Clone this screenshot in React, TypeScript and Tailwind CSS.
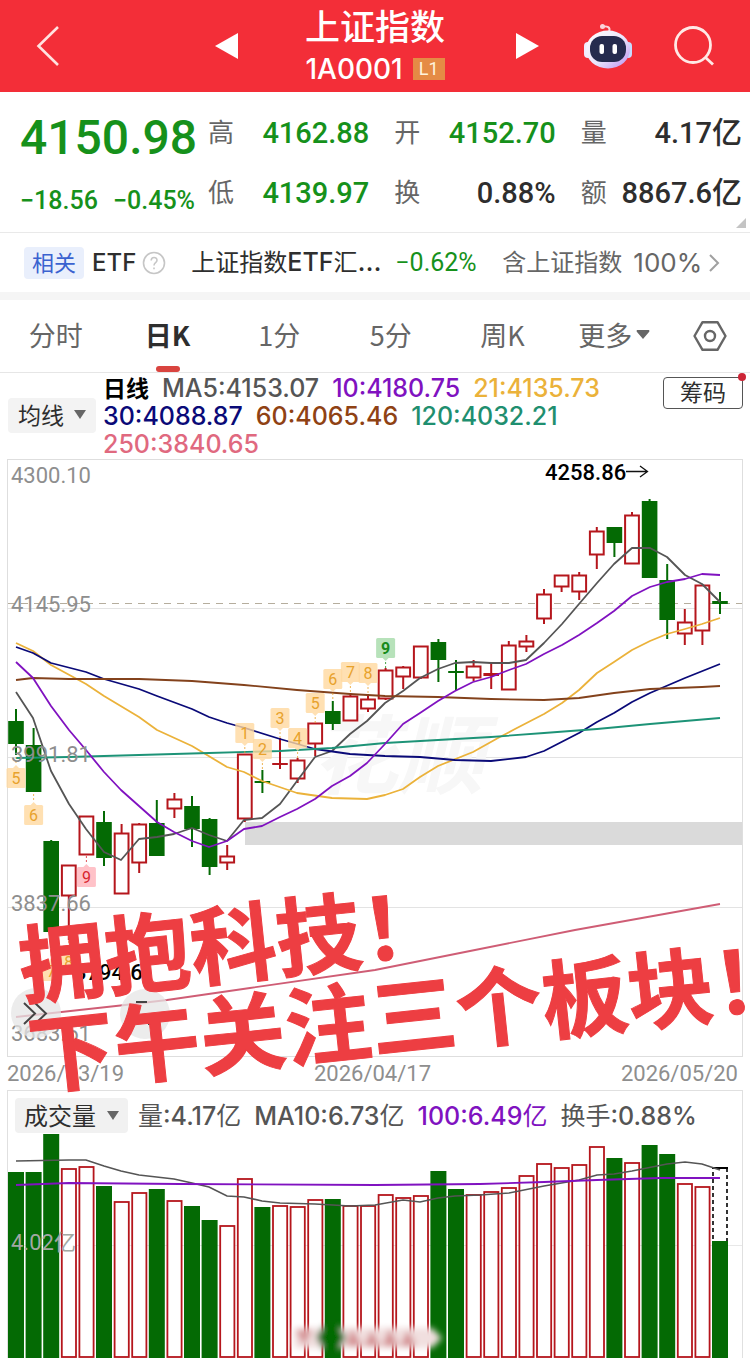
import React from "react";

type Candle = {
  up: boolean;
  high: number;
  top: number;
  bottom: number;
  low: number;
};

const STEP = 17.6;
const FIRST = 16;
const xAt = (i: number) => FIRST + i * STEP;

const c = (up: boolean, high: number, top: number, bottom: number, low: number): Candle => ({
  up,
  high,
  top,
  bottom,
  low,
});

const candles: Candle[] = [
  c(false, 709, 721, 744, 755),
  c(false, 728, 745, 792, 792),
  c(false, 840, 841, 932, 948),
  c(true, 865, 865, 896, 940),
  c(true, 816, 816, 855, 855),
  c(false, 811, 822, 858, 866),
  c(true, 824, 833, 894, 894),
  c(true, 823, 824, 863, 873),
  c(false, 800, 823, 856, 856),
  c(true, 793, 799, 809, 818),
  c(false, 796, 806, 829, 847),
  c(false, 818, 819, 867, 875),
  c(true, 845, 856, 863, 870),
  c(true, 754, 754, 819, 822),
  c(false, 770, 781, 783, 793),
  c(true, 738, 763, 765, 769),
  c(true, 758, 760, 779, 783),
  c(true, 723, 723, 744, 756),
  c(false, 701, 711, 724, 730),
  c(true, 693, 696, 721, 721),
  c(true, 694, 699, 709, 712),
  c(true, 668, 670, 699, 700),
  c(true, 666, 667, 677, 689),
  c(true, 646, 646, 678, 679),
  c(false, 639, 642, 660, 682),
  c(false, 660, 671, 673, 690),
  c(true, 660, 666, 678, 681),
  c(true, 663, 673, 676, 689),
  c(true, 641, 645, 690, 690),
  c(true, 635, 641, 647, 652),
  c(true, 589, 594, 619, 624),
  c(true, 575, 575, 587, 592),
  c(true, 572, 575, 592, 600),
  c(true, 527, 531, 555, 569),
  c(false, 527, 527, 543, 557),
  c(true, 512, 515, 564, 564),
  c(false, 499, 501, 578, 578),
  c(false, 564, 580, 620, 639),
  c(true, 609, 622, 634, 645),
  c(true, 585, 585, 631, 645),
  c(false, 592, 601, 604, 614),
];

const averages: { color: string; points: string }[] = [
  {
    color: "#555555",
    points:
      "16,692 33,718 51,771 69,804 86,829 104,852 121,860 139,839 157,837 174,834 192,828 209,835 227,841 244,820 262,818 280,804 297,781 315,757 332,751 350,734 367,721 385,703 403,691 420,678 438,669 455,663 473,662 491,663 509,663 526,660 544,643 562,624 579,604 597,583 614,564 632,548 650,548 667,557 685,575 702,584 720,602",
  },
  {
    color: "#ebb23a",
    points:
      "16,643 33,651 51,665 86,684 104,696 139,717 157,730 192,746 227,767 244,772 262,781 297,793 332,798 367,799 385,795 403,789 420,777 438,766 473,752 498,738 515,729 544,714 562,703 579,690 597,673 614,662 632,650 650,641 667,634 685,629 702,624 720,618",
  },
  {
    color: "#0a0a78",
    points:
      "16,647 33,653 51,663 86,672 104,679 139,689 157,696 192,709 209,717 227,723 245,728 280,739 315,749 350,754 385,756 420,757 455,760 491,761 526,757 544,751 579,733 597,722 614,713 632,702 650,693 685,678 720,664",
  },
  {
    color: "#83421c",
    points:
      "16,680 33,678 69,679 139,679 192,681 244,685 297,690 350,694 385,696 438,697 491,699 544,700 579,698 614,693 650,689 702,687 720,686",
  },
  {
    color: "#1d9377",
    points:
      "16,758 69,757 139,755 209,753 280,751 332,748 385,743 438,740 491,737 544,733 597,729 650,724 685,721 720,718",
  },
  {
    color: "#8012c0",
    points:
      "16,662 33,678 51,706 69,730 86,750 104,772 121,790 139,806 157,822 174,832 192,841 209,847 227,841 244,829 262,826 280,817 297,809 315,799 332,786 350,776 367,763 385,744 403,724 420,713 438,701 455,691 473,682 491,677 509,670 526,664 544,654 562,645 579,635 597,623 614,611 632,596 650,587 667,582 685,579 702,574 720,575",
  },
  { color: "#cf5d75", points: "16,1017 125,1005 167,1000 250,988 375,970 475,950 575,930 720,904" },
];

const tags: { i: number; y: number; text: string; tone: "orange" | "red" | "green"; down: boolean }[] = [
  { i: 0, y: 778, text: "5", tone: "orange", down: false },
  { i: 1, y: 815, text: "6", tone: "orange", down: false },
  { i: 2, y: 971, text: "7", tone: "orange", down: false },
  { i: 3, y: 962, text: "8", tone: "orange", down: false },
  { i: 4, y: 877, text: "9", tone: "red", down: false },
  { i: 13, y: 733, text: "1", tone: "orange", down: true },
  { i: 14, y: 749, text: "2", tone: "orange", down: true },
  { i: 15, y: 718, text: "3", tone: "orange", down: true },
  { i: 16, y: 738, text: "4", tone: "orange", down: true },
  { i: 17, y: 703, text: "5", tone: "orange", down: true },
  { i: 18, y: 679, text: "6", tone: "orange", down: true },
  { i: 19, y: 672, text: "7", tone: "orange", down: true },
  { i: 20, y: 673, text: "8", tone: "orange", down: true },
  { i: 21, y: 648, text: "9", tone: "green", down: true },
];

const tones = {
  orange: { bg: "#ffd9a0", fg: "#e8a22c" },
  red: { bg: "#ffb3bb", fg: "#d8262f" },
  green: { bg: "#a6dbaa", fg: "#168a1c" },
};

const volumes: [boolean, number][] = [
  [false, 1172], [false, 1172], [false, 1134], [true, 1168], [true, 1166], [false, 1186],
  [true, 1201], [true, 1192], [false, 1189], [true, 1200], [false, 1206], [false, 1220],
  [true, 1225], [true, 1178], [false, 1207], [true, 1205], [true, 1206], [true, 1199],
  [false, 1199], [true, 1205], [true, 1205], [true, 1194], [true, 1197], [true, 1195],
  [false, 1171], [false, 1189], [true, 1194], [true, 1191], [true, 1187], [true, 1175],
  [true, 1163], [true, 1167], [true, 1164], [true, 1146], [false, 1158], [true, 1162],
  [false, 1145], [false, 1154], [true, 1183], [true, 1186],
];

const RED = "#b5161c";
const GREEN = "#046a04";

const axisLabels: [number, string][] = [
  [483, "4300.10"],
  [612, "4145.95"],
  [762, "3991.81"],
  [911, "3837.66"],
  [1041, "3683.51"],
];

function Header() {
  return (
    <header className="flex h-[92px] items-center bg-[#f32e38] text-white">
      <button aria-label="返回" className="ml-9 flex h-12 w-6 items-center justify-center">
        <svg viewBox="0 0 24 40" className="h-10 w-6" fill="none" stroke="#ffe3e0" strokeWidth="2.6">
          <path d="M22 1 L2.500 20 L22 39" />
        </svg>
      </button>
      <div className="flex flex-1 items-center justify-end pr-[62px]">
        <button aria-label="上一个">
          <svg viewBox="0 0 23 26" className="h-[26px] w-[23px]" fill="#fff">
            <path d="M23 0 V26 L0 13 Z" />
          </svg>
        </button>
      </div>
      <div className="flex w-[150px] flex-col items-center">
        <h1 className="text-[35px] font-medium leading-[46px]">上证指数</h1>
        <div className="flex items-center gap-[10px] leading-[42px]">
          <span className="font-[Inter] text-[28px] font-medium">1A0001</span>
          <span className="bg-[#e58b45] px-[6px] font-[Roboto] text-[18px] leading-[22px] text-[#fff3dc]">L1</span>
        </div>
      </div>
      <div className="flex w-[300px] items-center pl-[66px]">
        <button aria-label="下一个">
          <svg viewBox="0 0 23 26" className="h-[26px] w-[23px]" fill="#fff">
            <path d="M0 0 V26 L23 13 Z" />
          </svg>
        </button>
        <button aria-label="智能助手" className="ml-11">
          <svg viewBox="0 0 50 46" className="h-[46px] w-[50px]">
            <defs>
              <linearGradient id="shell" x1="0" y1="0" x2="1" y2="1">
                <stop offset="0" stopColor="#ffffff" />
                <stop offset="0.55" stopColor="#e9e4fb" />
                <stop offset="1" stopColor="#b98cf0" />
              </linearGradient>
            </defs>
            <path d="M26 9 C28 4 24 3 20 3.500" fill="none" stroke="#fbd3da" strokeWidth="2" />
            <circle cx="19.500" cy="3.500" r="2.500" fill="#fbd3da" />
            <rect x="1" y="19" width="8" height="16" rx="4" fill="#f1ecff" />
            <rect x="41" y="19" width="8" height="16" rx="4" fill="#c6dcff" />
            <ellipse cx="25" cy="26.500" rx="22" ry="19" fill="url(#shell)" />
            <rect x="7" y="13" width="36" height="26" rx="12" fill="#252b4e" />
            <rect x="16.500" y="21" width="4.500" height="10" rx="2" fill="#fff" />
            <rect x="29.500" y="21" width="4.500" height="10" rx="2" fill="#fff" />
          </svg>
        </button>
        <button aria-label="搜索" className="ml-[41px]">
          <svg viewBox="0 0 40 40" className="size-10" fill="none" stroke="#ffe9e6" strokeWidth="2.8">
            <circle cx="19" cy="19" r="17.500" />
            <path d="M31.500 31.500 L39 38.500" />
          </svg>
        </button>
      </div>
    </header>
  );
}

function Stat({ label, value, unit, green }: { label: string; value: string; unit?: string; green?: boolean }) {
  return (
    <div className="flex items-center justify-between leading-10">
      <dt className="pb-1 text-[26px] text-[#666]">{label}</dt>
      <dd
        className={
          green
            ? "font-[Roboto] text-[29px] font-medium text-[#16911b]"
            : "font-[Roboto] text-[29px] font-medium text-[#2e2e2e]"
        }
      >
        {value}
        {unit && <span className="font-['Noto_Sans_CJK_SC'] text-[30px] leading-none">{unit}</span>}
      </dd>
    </div>
  );
}

function Quote() {
  return (
    <section className="relative flex h-[141px] border-b border-[#e9e9e9] pl-5 pr-2 pt-[11px]">
      <div className="w-[188px] shrink-0 font-[Roboto] font-medium text-[#16911b]">
        <div className="text-[48px] leading-[70px]">4150.98</div>
        <div className="flex w-[175px] justify-between text-[25px] leading-[56px]">
          <span>−18.56</span>
          <span>−0.45%</span>
        </div>
      </div>
      <dl className="grid h-[120px] flex-1 grid-cols-3 grid-rows-2 gap-x-[25px]">
        <Stat label="高" value="4162.88" green />
        <Stat label="开" value="4152.70" green />
        <Stat label="量" value="4.17" unit="亿" />
        <Stat label="低" value="4139.97" green />
        <Stat label="换" value="0.88%" />
        <Stat label="额" value="8867.6" unit="亿" />
      </dl>
      <svg viewBox="0 0 10 10" className="absolute bottom-1 right-1 size-[10px]" fill="#c4c4c4">
        <path d="M10 0 V10 H0 Z" />
      </svg>
    </section>
  );
}

function Related() {
  return (
    <a
      href="#etf"
      className="flex h-[67px] items-center whitespace-nowrap border-b-8 border-[#f5f5f5] pl-6 text-[24px] text-[#2e2e2e]"
    >
      <span className="rounded bg-[#e9effc] px-2 pb-1 text-[22px] leading-7 text-[#3a62d0]">相关</span>
      <span className="ml-2 font-[Inter] font-medium">ETF</span>
      <svg viewBox="0 0 24 24" className="ml-[6px] size-6" fill="none" stroke="#c6c6c6" strokeWidth="1.600">
        <circle cx="12" cy="12" r="10.500" />
        <path d="M9.200 9.500 C9.200 5.500 15 5.700 15 9.200 C15 11.600 12 11.800 12 14.400 M12 16.600 V18.200" />
      </svg>
      <span className="ml-[25px] w-[192px] pb-1">
        上证指数<span className="font-[Inter] text-[25px] font-medium">ETF</span>汇
        <span className="font-[Inter] text-[28px]">...</span>
      </span>
      <span className="ml-[12px] w-[95px] font-[Roboto] text-[25px] text-[#16911b]">−0.62%</span>
      <span className="ml-3 pb-1 text-[#666]">含上证指数</span>
      <span className="ml-[11px] font-[Inter] text-[26px] text-[#666]">100%</span>
      <svg viewBox="0 0 12 20" className="ml-[6px] h-5 w-3" fill="none" stroke="#a0a0a0" strokeWidth="2">
        <path d="M2 2 L10 10 L2 18" />
      </svg>
    </a>
  );
}

function Tabs() {
  const names = ["分时", "日K", "1分", "5分", "周K", "更多"];
  return (
    <nav className="flex h-[73px] border-b border-[#e6e6e6] text-[27px] text-[#666]">
      {names.map((name) => {
        const active = name === "日K";
        return (
          <button
            key={name}
            className={
              active
                ? "relative flex flex-1 items-center justify-center pb-[2px] font-bold text-[#2e2e2e]"
                : "relative flex flex-1 items-center justify-center pb-[2px]"
            }
          >
            {name}
            {name === "更多" && (
              <svg viewBox="0 0 14 10" className="ml-1 h-[10px] w-[14px]" fill="#666">
                <path d="M1 0 H13 Q14 1 13 2 L7 9 L1 2 Q0 1 1 0 Z" />
              </svg>
            )}
            {active && <span className="absolute bottom-0 h-[6px] w-6 rounded-full bg-[#d9443f]" />}
          </button>
        );
      })}
      <button aria-label="设置" className="flex w-20 items-center justify-center">
        <svg viewBox="0 0 34 30" className="h-[30px] w-[34px]" fill="none" stroke="#666" strokeWidth="2.400">
          <path d="M9.500 1.200 H24.500 L32.500 15 L24.500 28.800 H9.500 L1.500 15 Z" strokeLinejoin="round" />
          <circle cx="17" cy="15" r="5" />
        </svg>
      </button>
    </nav>
  );
}

function Caret() {
  return (
    <svg viewBox="0 0 12 9" className="h-[9px] w-3" fill="#666">
      <path d="M0 0 H12 L6 9 Z" />
    </svg>
  );
}

function Legend() {
  return (
    <section className="flex h-[86px] items-start pl-2 pr-[7px]">
      <button className="mt-[25px] flex h-[35px] w-[88px] items-center justify-center gap-[10px] rounded bg-[#f3f3f3] pb-[2px] text-[23px] text-[#2e2e2e]">
        均线 <Caret />
      </button>
      <div className="ml-[7px] min-w-0 flex-1 whitespace-nowrap pt-px font-[Inter] text-[25px] font-medium leading-7">
        <div className="flex gap-[13px]">
          <span className="font-['Noto_Sans_CJK_SC'] text-[23px] font-bold leading-[26px] text-black">日线</span>
          <span className="text-[#555]">MA5:4153.07</span>
          <span className="text-[#8012c0]">10:4180.75</span>
          <span className="text-[#ebb23a]">21:4135.73</span>
        </div>
        <div className="flex gap-[13px]">
          <span className="text-[#0a0a78]">30:4088.87</span>
          <span className="text-[#8f4214]">60:4065.46</span>
          <span className="text-[#1f8f70]">120:4032.21</span>
        </div>
        <div className="text-[#e0697f]">250:3840.65</div>
      </div>
      <button className="relative mt-1 h-8 w-20 rounded border border-[#555] pb-1 text-[23px] leading-[26px] text-[#2e2e2e]">
        筹码
        <span className="absolute -right-1 -top-[5px] size-2 rounded-full bg-[#cc2536]" />
      </button>
    </section>
  );
}

function PriceChart() {
  return (
    <div className="relative">
      <svg viewBox="0 459 750 599" className="block h-auto w-full">
        <rect x="7.500" y="459.500" width="735" height="597" fill="none" stroke="#dedede" />
        <path d="M8 608.500 H742 M8 757.500 H742 M8 907.500 H742" stroke="#e3e3e3" />
        <text x="312" y="787" fontFamily="Noto Sans CJK SC" fontWeight="700" fontSize="86" fill="#f7f7f7" fontStyle="italic">
          花顺
        </text>
        <path d="M8 603.500 H742" stroke="#b5ad9d" strokeDasharray="7 6" />
        <rect x="245" y="822" width="497" height="23" fill="#dadada" />
        {candles.map((k, i) => {
          const x = xAt(i);
          const color = k.up ? RED : GREEN;
          const thin = k.bottom - k.top < 4;
          return (
            <g key={i} stroke={color} strokeWidth="2">
              <path d={`M${x} ${k.high} V${k.top} M${x} ${k.bottom} V${k.low}`} />
              {k.up && !thin ? (
                <rect x={x - 6.9} y={k.top + 0.5} width="13.800" height={k.bottom - k.top - 1} fill="#fff" />
              ) : (
                <rect x={x - 7.8} y={k.top} width="15.600" height={k.bottom - k.top} fill={color} stroke="none" />
              )}
              {thin && <path d={`M${x} ${k.top} V${k.bottom}`} />}
            </g>
          );
        })}
        {averages.map((a) => (
          <polyline
            key={a.color}
            points={a.points}
            fill="none"
            stroke={a.color}
            strokeWidth="1.800"
            strokeLinejoin="round"
          />
        ))}
        {tags.map((t) => {
          const x = xAt(t.i);
          const tone = tones[t.tone];
          return (
            <g key={`${t.i}-${t.text}`}>
              <g fill={tone.bg} opacity="0.800">
                <rect x={x - 9.5} y={t.y - 10} width="19" height="20" rx="1.500" />
                <path
                  d={
                    t.down
                      ? `M${x - 3} ${t.y + 10} L${x} ${t.y + 13} L${x + 3} ${t.y + 10} Z`
                      : `M${x - 3} ${t.y - 10} L${x} ${t.y - 13} L${x + 3} ${t.y - 10} Z`
                  }
                />
              </g>
              <path
                d={t.down ? `M${x} ${t.y + 14} V${t.y + 21}` : `M${x} ${t.y - 21} V${t.y - 14}`}
                stroke={tone.fg}
                strokeWidth="0.800"
                strokeDasharray="2 2"
              />
              <text
                x={x}
                y={t.y + 6}
                textAnchor="middle"
                fontFamily="Roboto"
                fontWeight={t.tone === "green" ? 700 : 400}
                fontSize="16"
                fill={tone.fg}
              >
                {t.text}
              </text>
            </g>
          );
        })}
        <g fontFamily="Roboto" fontSize="22" fill="#8e8e8e">
          {axisLabels.map(([y, label]) => (
            <text key={label} x="11" y={y}>
              {label}
            </text>
          ))}
        </g>
        <g fontFamily="Roboto" fontSize="22" fontWeight="500" fill="#000">
          <text x="545" y="480">4258.86</text>
          <text x="74" y="980">3794.6</text>
        </g>
        <path d="M626 471.500 H647 M640 466 L647.500 471.500 L640 477 M72 971.500 H54 M61 966 L54 971.500 L61 977" fill="none" stroke="#111" strokeWidth="1.300" />
        <g fill="#e6e6e6" opacity="0.750">
          <circle cx="36" cy="1013" r="25" />
          <circle cx="145" cy="1014" r="25" />
        </g>
        <path d="M24 1003 L35 1013.500 L24 1024 M35 1003 L46 1013.500 L35 1024 M136 1002 H147 M148 1024 H156" fill="none" stroke="#444" strokeWidth="2" />
      </svg>
      <p className="absolute left-[14px] top-[458px] origin-top-left -rotate-6 whitespace-nowrap text-[86px] font-bold leading-[90px] text-[#ed3e42] [-webkit-text-stroke:1px_#ed3e42]">
        拥抱科技！
        <br />
        下午关注三个板块！
      </p>
    </div>
  );
}

function VolumeChart() {
  return (
    <section className="mx-[7px] border border-b-0 border-[#e0e0e0]">
      <div className="flex h-[43px] items-center whitespace-nowrap pl-[7px] pt-[6px] font-[Inter] text-[25px] text-[#555]">
        <button className="mr-[10px] flex h-[35px] w-[113px] items-center justify-center gap-[11px] rounded bg-[#f1f1f1] pb-px text-[#2e2e2e]">
          <span className="font-['Noto_Sans_CJK_SC'] text-[24px]">成交量</span>
          <Caret />
        </button>
        <div className="flex gap-[13px] font-medium leading-9">
          <span><Cn>量</Cn>:4.17<Cn>亿</Cn></span>
          <span>MA10:6.73<Cn>亿</Cn></span>
          <span className="text-[#8012c0]">100:6.49<Cn>亿</Cn></span>
          <span><Cn>换手</Cn>:0.88%</span>
        </div>
      </div>
      <svg viewBox="8 1134 734 224" className="block h-auto w-full">
        <defs>
          <filter id="soft" x="-20%" y="-60%" width="140%" height="220%">
            <feGaussianBlur stdDeviation="3" />
          </filter>
        </defs>
        <path d="M8 1245.500 H742" stroke="#e8e8e8" />
        {volumes.map(([up, top], i) =>
          up ? (
            <rect key={i} x={xAt(i) - 7} y={top + 1} width="14.200" height={1356 - top} fill="#fff" stroke={RED} strokeWidth="1.800" />
          ) : (
            <rect key={i} x={xAt(i) - 8} y={top} width="16" height={1358 - top} fill={GREEN} />
          ),
        )}
        <rect x="713" y="1168" width="14" height="74" fill="#fff" stroke="#000" strokeWidth="1.600" strokeDasharray="4 3" />
        <path d="M712 1168 H728" stroke="#000" strokeWidth="2" />
        <rect x="712" y="1241" width="16" height="117" fill={GREEN} />
        <polyline
          points="16,1161 69,1160 86,1160 104,1166 121,1171 139,1175 174,1179 192,1183 209,1187 227,1196 244,1197 262,1201 280,1203 315,1204 350,1206 375,1205 403,1200 420,1202 438,1198 455,1196 480,1195 509,1193 544,1186 579,1180 597,1175 614,1174 632,1171 667,1164 685,1162 702,1164 720,1170"
          fill="none"
          stroke="#555"
          strokeWidth="1.700"
        />
        <polyline
          points="16,1185 69,1183 180,1184 375,1185 480,1184 544,1182 597,1180 660,1178 720,1178"
          fill="none"
          stroke="#8012c0"
          strokeWidth="1.800"
        />
        <text x="11" y="1250" fontFamily="Roboto, 'Noto Sans CJK SC'" fontSize="22" fill="#a3a8a3">
          4.02亿
        </text>
        <g filter="url(#soft)">
          <path d="M294 1328 H432 L442 1338 L432 1348 H294 Z" fill="#f1dfdf" />
          <path d="M296 1330 H312 L304 1346 Z M346 1346 L352 1328 L362 1346 Z M364 1346 L372 1330 L380 1346 Z M382 1346 L390 1328 L398 1346 Z M400 1346 L408 1330 L416 1346 Z" fill="#d48f92" />
          <path d="M316 1337 L324 1326 H338 L346 1337 L338 1350 H324 Z" fill={GREEN} />
        </g>
      </svg>
    </section>
  );
}

function Cn({ children }: { children: React.ReactNode }) {
  return <span className="font-['Noto_Sans_CJK_SC'] text-[25px] font-normal leading-none">{children}</span>;
}

export default function App() {
  return (
    <main className="w-full overflow-hidden bg-white font-['Noto_Sans_CJK_SC',sans-serif]">
      <Header />
      <Quote />
      <Related />
      <Tabs />
      <Legend />
      <PriceChart />
      <div className="flex h-8 items-center justify-between pb-[2px] pl-[7px] pr-3 font-[Roboto] text-[22px] text-[#8e8e8e]">
        <time>2026/03/19</time>
        <time>2026/04/17</time>
        <time>2026/05/20</time>
      </div>
      <VolumeChart />
    </main>
  );
}
